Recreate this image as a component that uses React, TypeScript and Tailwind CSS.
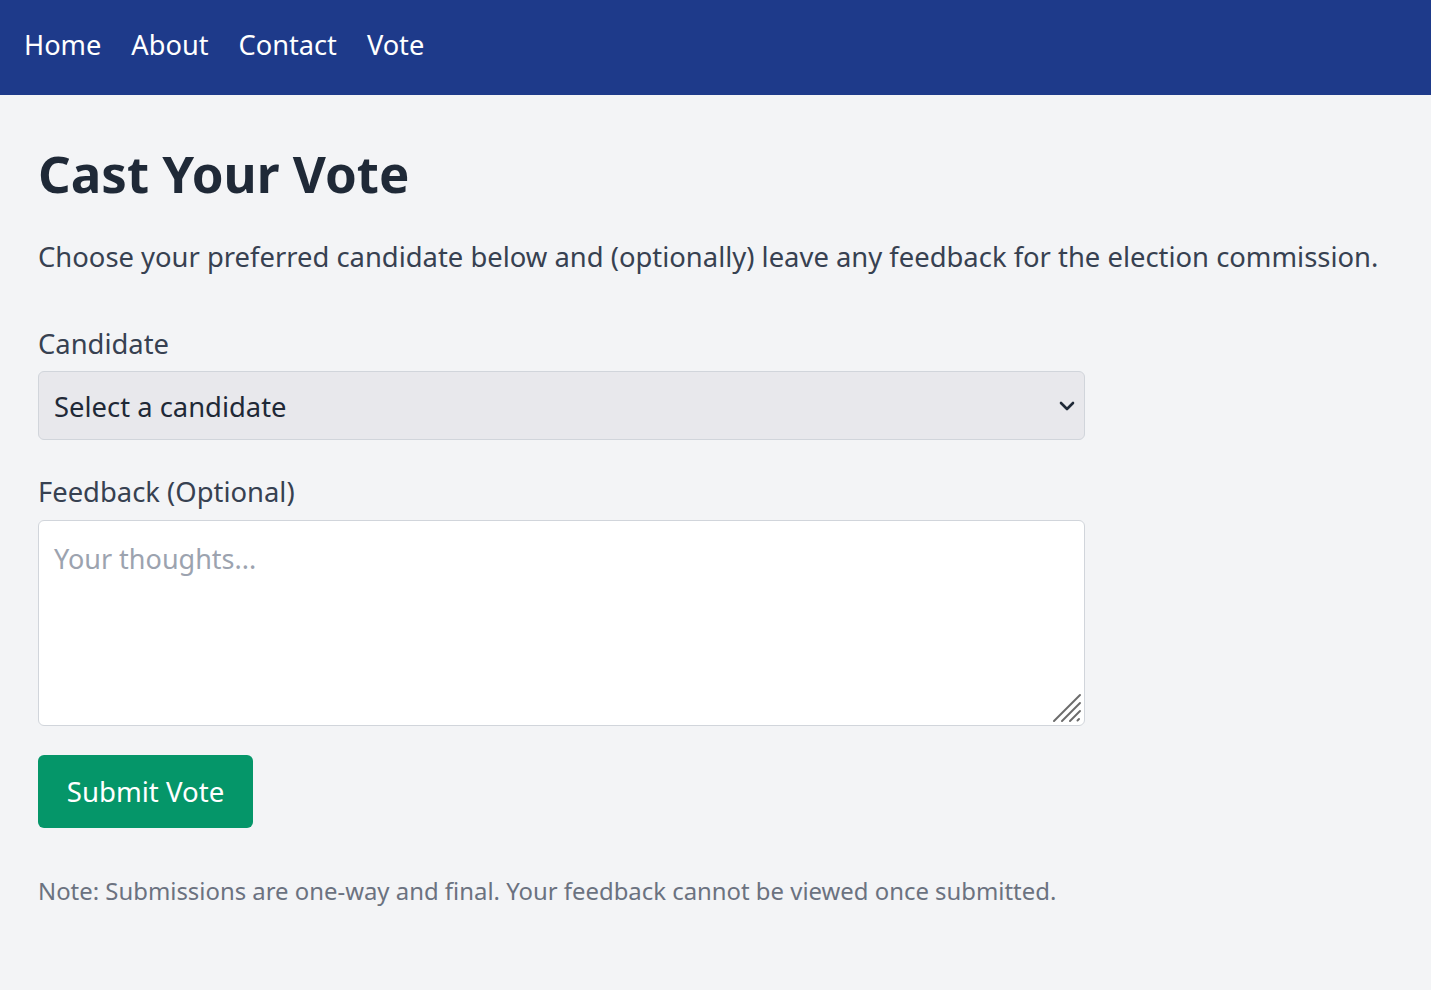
import React from 'react';

const App: React.FC = () => {
  return (
    <div className="min-h-[990px] bg-[#f3f4f6] font-['Noto_Sans',sans-serif]">
      {/* Top navigation */}
      <nav className="h-[95px] bg-[#1e3a8a] px-[24px] pb-[4px] flex items-center gap-[30px] text-white text-[27.2px]">
        <a href="#">Home</a>
        <a href="#">About</a>
        <a href="#">Contact</a>
        <a href="#">Vote</a>
      </nav>

      <main className="px-[38px] pt-[38px]">
        <h1 className="text-[51px] leading-[80px] font-bold text-[#1f2937]">Cast Your Vote</h1>
        <p className="mt-[24px] text-[27.4px] leading-[40px] text-[#374151]">
          Choose your preferred candidate below and (optionally) leave any feedback for the election commission.
        </p>

        <form className="mt-[47px] w-[1047px]" onSubmit={(e) => e.preventDefault()}>
          <label className="block text-[27.4px] leading-[40px] text-[#374151]">Candidate</label>
          <div className="relative mt-[7px]">
            <select className="w-full h-[69px] appearance-none rounded-[6px] border border-[#d1d5db] bg-[#e8e8ec] px-[15px] pt-[2px] text-[27.4px] text-[#1f2937] outline-none">
              <option>Select a candidate</option>
            </select>
            <svg
              className="pointer-events-none absolute right-[10px] top-[27px]"
              width="16"
              height="16"
              viewBox="0 0 16 16"
              fill="none"
              stroke="#1f2937"
              strokeWidth="2.6"
              strokeLinecap="round"
              strokeLinejoin="round"
            >
              <path d="M2 5l6 6 6-6" />
            </svg>
          </div>

          <label className="mt-[32px] block text-[27.4px] leading-[40px] text-[#374151]">Feedback (Optional)</label>
          <div className="relative mt-[8px]">
            <textarea
              placeholder="Your thoughts..."
              className="block w-full h-[206px] resize-none rounded-[6px] border border-[#d1d5db] bg-white px-[15px] py-[18px] text-[27px] leading-[40px] text-[#1f2937] placeholder:text-[#9ca3af] outline-none"
            />
            {/* resize grip */}
            <svg
              className="pointer-events-none absolute right-[3px] bottom-[3px]"
              width="30"
              height="30"
              viewBox="0 0 30 30"
              fill="none"
              stroke="#6b6b6b"
              strokeWidth="2"
              strokeLinecap="round"
            >
              <path d="M2 28L28 2" />
              <path d="M10 28L28 10" />
              <path d="M18 28L28 18" />
              <path d="M25.5 27.5L27 26" />
            </svg>
          </div>

          <button
            type="submit"
            className="mt-[29px] h-[73px] w-[215px] rounded-[6px] bg-[#059669] text-[27.6px] text-white"
          >
            Submit Vote
          </button>
        </form>

        <p className="mt-[46px] text-[23.9px] leading-[34px] text-[#6b7280]">
          Note: Submissions are one-way and final. Your feedback cannot be viewed once submitted.
        </p>
      </main>
    </div>
  );
};

export default App;
